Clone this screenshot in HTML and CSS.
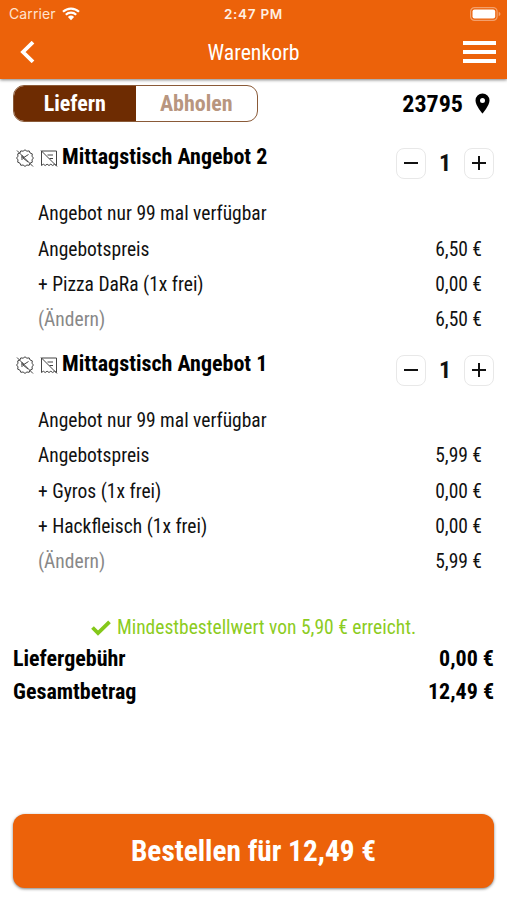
FILE: index.html
```html
<!DOCTYPE html>
<html lang="de">
<head>
    <meta charset="utf-8">
    <title>Warenkorb</title>
    <link rel="stylesheet" href="styles.css">
</head>
<body>

<!-- Icons -->
<svg class="icons">
    <symbol id="no-discount" viewBox="0 0 18 18">
        <path d="M9 .8l1.900 1.400 2.300-.3.900 2.100 2.200.9-.3 2.300L17.400 9 16 10.900l.3 2.300-2.200.9-.9 2.200-2.300-.3L9 17.400 7.100 16l-2.300.3-.9-2.200-2.200-.9.3-2.300L.6 9 2 7.200l-.3-2.300L3.900 4l.9-2.100 2.300.3zM12.500 5.500L7 9l5 4M6 6v5M5.500 8H8M1 1.500l16 16"/>
    </symbol>
    <symbol id="no-coupon" viewBox="0 0 18 18">
        <path d="M1.500 2h15v14.500l-1.900-1.300-1.900 1.300-1.900-1.300L9 16.500l-1.900-1.300-1.900 1.300-1.900-1.300-1.800 1.300zM7.500 6H13M9.500 9.500H13M1 1.500l16 16"/>
    </symbol>
</svg>

<header>
    <div class="status">
        <div class="carrier">
            <span>Carrier</span>
            <svg width="18" height="14" viewBox="0 0 18 14"><path d="M1 4.800a11.500 11.500 0 0 1 16 0M3.800 7.800a7.500 7.500 0 0 1 10.400 0" fill="none" stroke="#fff" stroke-width="2.200"/><path d="M5.900 10a4.600 4.600 0 0 1 6.200 0L9 13.200z" fill="#fff"/></svg>
        </div>
        <span class="time">2:47 PM</span>
        <svg class="battery" width="31" height="14" viewBox="0 0 31 14"><rect x=".6" y=".6" width="26.500" height="12.800" rx="4" fill="none" stroke="#fff" stroke-opacity=".4" stroke-width="1.200"/><rect x="2.500" y="2.500" width="22.700" height="9" rx="2" fill="#fff"/><path d="M28.700 4.800q1.800.8 1.800 2.200t-1.800 2.200z" fill="#fff" fill-opacity=".4"/></svg>
    </div>
    <div class="nav">
        <svg width="15" height="22" viewBox="0 0 15 22"><path d="M13 1.200L3 11l10 9.800" fill="none" stroke="#fff" stroke-width="3.800"/></svg>
        <h1>Warenkorb</h1>
        <div class="menu"><i></i><i></i><i></i></div>
    </div>
</header>

<main>
    <div class="options">
        <div class="toggle">
            <span class="active">Liefern</span>
            <span>Abholen</span>
        </div>
        <div class="zip">
            <span>23795</span>
            <svg width="15" height="21" viewBox="0 0 15 21"><path fill-rule="evenodd" d="M7.500.5a7 7 0 0 0-7 7C.5 12.500 7.500 20.500 7.500 20.500s7-8 7-13a7 7 0 0 0-7-7zm0 4.500a2.500 2.500 0 1 1 0 5 2.500 2.500 0 0 1 0-5z"/></svg>
        </div>
    </div>

    <section class="item">
        <div class="item-head">
            <svg class="icon"><use href="#no-discount"/></svg>
            <svg class="icon"><use href="#no-coupon"/></svg>
            <h2>Mittagstisch Angebot 2</h2>
            <div class="amount">
                <button><svg width="14" height="14"><path d="M0 7h14"/></svg></button>
                <b>1</b>
                <button><svg width="14" height="14"><path d="M0 7h14M7 0v14"/></svg></button>
            </div>
        </div>
        <div class="lines">
            <div><span>Angebot nur 99 mal verfügbar</span></div>
            <div><span>Angebotspreis</span><span>6,50 €</span></div>
            <div><span>+ Pizza DaRa (1x frei)</span><span>0,00 €</span></div>
            <div><span class="edit">(Ändern)</span><span>6,50 €</span></div>
        </div>
    </section>

    <section class="item">
        <div class="item-head">
            <svg class="icon"><use href="#no-discount"/></svg>
            <svg class="icon"><use href="#no-coupon"/></svg>
            <h2>Mittagstisch Angebot 1</h2>
            <div class="amount">
                <button><svg width="14" height="14"><path d="M0 7h14"/></svg></button>
                <b>1</b>
                <button><svg width="14" height="14"><path d="M0 7h14M7 0v14"/></svg></button>
            </div>
        </div>
        <div class="lines">
            <div><span>Angebot nur 99 mal verfügbar</span></div>
            <div><span>Angebotspreis</span><span>5,99 €</span></div>
            <div><span>+ Gyros (1x frei)</span><span>0,00 €</span></div>
            <div><span>+ Hackfleisch (1x frei)</span><span>0,00 €</span></div>
            <div><span class="edit">(Ändern)</span><span>5,99 €</span></div>
        </div>
    </section>

    <div class="minimum">
        <svg width="20" height="16" viewBox="0 0 20 16"><path d="M1.500 7.500l5.500 5.500L18.500 1.800" fill="none" stroke="#84c81a" stroke-width="3.800"/></svg>
        <span>Mindestbestellwert von 5,90 € erreicht.</span>
    </div>

    <div class="totals">
        <div><span>Liefergebühr</span><span>0,00 €</span></div>
        <div><span>Gesamtbetrag</span><span>12,49 €</span></div>
    </div>
</main>

<footer>
    <button class="order"><span>Bestellen für 12,49 €</span></button>
</footer>

</body>
</html>
```

FILE: styles.css
```css
* {
    box-sizing: border-box;
}

body {
    margin: 0;
    height: 900px;
    display: flex;
    flex-direction: column;
    background: #fff;
    color: #111;
    font-family: "Roboto Condensed", Roboto, sans-serif;
    font-stretch: 75%;
    font-size: 19.5px;
}

h1, h2 {
    margin: 0;
}

button {
    font: inherit;
    padding: 0;
}

.icons {
    display: none;
}

/* Header */
header {
    height: 79px;
    background: #ec620a;
    color: #fff;
    box-shadow: 0 1px 3px rgba(0, 0, 0, 0.5);
}

.status {
    height: 27px;
    padding: 0 6px 0 9px;
    display: grid;
    grid-template-columns: 215px 1fr auto;
    align-items: center;
    font-family: Inter, sans-serif;
    font-stretch: normal;
    font-size: 14px;
}

.carrier {
    display: flex;
    align-items: center;
    gap: 6px;
    color: #ffe3cf;
    letter-spacing: 0.1px;
}

.time {
    font-weight: 600;
    font-size: 13.5px;
    letter-spacing: 0.7px;
    color: #ffefe2;
}

.nav {
    height: 50px;
    padding: 0 11px 0 20px;
    display: grid;
    grid-template-columns: 187.5px 1fr auto;
    align-items: center;
}

h1 {
    font-size: 21.8px;
    font-weight: 400;
}

.menu {
    width: 33px;
    display: flex;
    flex-direction: column;
    gap: 5px;
}

.menu i {
    height: 4px;
    background: #fff;
}

/* Lieferung oder Abholung */
main {
    flex: 1;
    padding: 6px 13px 0;
}

.options {
    height: 37px;
    display: flex;
    justify-content: space-between;
    align-items: center;
}

.toggle {
    width: 245px;
    height: 37px;
    display: flex;
    border: 1px solid #8a5a38;
    border-radius: 11px;
    overflow: hidden;
    font-size: 22px;
    font-weight: 700;
}

.toggle span {
    flex: 1;
    line-height: 35px;
    text-align: center;
    color: #b8967f;
}

.toggle .active {
    background: #6e2c02;
    color: #fff;
}

.zip {
    display: flex;
    align-items: center;
    gap: 12px;
    padding-right: 4px;
    font-size: 24px;
    font-weight: 700;
    color: #000;
}

/* Artikel */
.item {
    padding-top: 22px;
}

.item + .item {
    padding-top: 13px;
}

.item-head {
    height: 40px;
    display: flex;
    align-items: flex-start;
}

.icon {
    width: 18px;
    height: 18px;
    margin: 5px 3px 0;
    fill: none;
    stroke: #444;
    stroke-width: 1;
}

h2 {
    flex: 1;
    margin-left: 1px;
    font-size: 22px;
    line-height: 26px;
    color: #000;
}

.amount {
    display: flex;
    align-items: center;
    margin-top: 4px;
}

.amount b {
    width: 38px;
    text-align: center;
    font-size: 24px;
    line-height: 31px;
}

.amount button {
    width: 30px;
    height: 31px;
    display: flex;
    align-items: center;
    justify-content: center;
    padding-bottom: 1px;
    background: #fff;
    border: 1px solid #e8e8e8;
    border-radius: 8px;
}

.amount path {
    stroke: #111;
    stroke-width: 2;
}

.lines {
    padding: 12px 12px 0 25px;
}

.lines div {
    height: 35.4px;
    display: flex;
    justify-content: space-between;
    align-items: center;
}

.edit {
    color: #888;
}

/* Summe */
.minimum {
    height: 30px;
    margin-top: 32px;
    padding-top: 2px;
    display: flex;
    justify-content: center;
    align-items: center;
    gap: 6px;
    color: #8ccc1e;
}

.totals {
    font-size: 22px;
    font-weight: 700;
    color: #000;
}

.totals div {
    height: 33px;
    display: flex;
    justify-content: space-between;
    align-items: center;
}

footer {
    padding: 0 13px 12px;
}

.order {
    display: block;
    width: 100%;
    height: 74px;
    border: 0;
    border-radius: 12px;
    background: #ec620a;
    color: #fff;
    font-size: 29.3px;
    font-weight: 700;
    box-shadow: 0 1px 3px rgba(0, 0, 0, 0.5);
}
```
